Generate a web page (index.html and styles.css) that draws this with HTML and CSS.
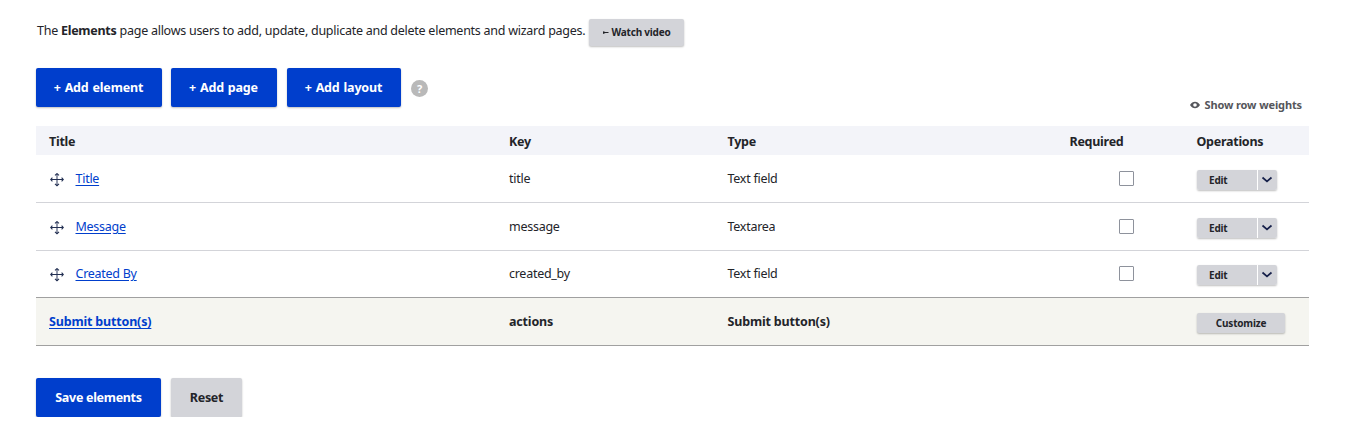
FILE: index.html
```html
<!DOCTYPE html>
<html lang="en">
<head>
<meta charset="utf-8">
<title>Elements</title>
<link rel="stylesheet" href="styles.css">
</head>
<body>
<svg class="defs" aria-hidden="true">
  <symbol id="move" viewBox="0 0 14 14"><path d="M7 1v12" fill="none" stroke="#8b91a5" stroke-width="1.800"/><path d="M1 6.500h12M5 2.400 7 .6l2 1.800M5 10.900l2 1.800 2-1.800M2.400 4.700 .7 6.500l1.700 1.800M11.600 4.700l1.700 1.800-1.700 1.800" fill="none" stroke="#222f52" stroke-width="1.100"/></symbol>
  <symbol id="chevron" viewBox="0 0 12 8"><path d="M1.500 1.500 6 5.400l4.500-3.900" fill="none" stroke="#16204a" stroke-width="1.700"/></symbol>
</svg>
<main class="page">
  <div class="intro">
    <span class="intro-text">The <strong>Elements</strong> page allows users to add, update, duplicate and delete elements and wizard pages.</span>
    <button class="button video"><svg class="play" viewBox="0 0 6 5"><path d="M0 1.200 2.500 2H5.500V3H2.500L0 4z" fill="#232429"/></svg><span>Watch video</span></button>
  </div>
  <div class="actions">
    <button class="button primary b-element"><span>+ Add element</span></button>
    <button class="button primary b-page"><span>+ Add page</span></button>
    <button class="button primary b-layout"><span>+ Add layout</span></button>
    <span class="help">?</span>
    <a class="weights"><svg class="eye" viewBox="0 0 10 8"><path fill="#55565b" fill-rule="evenodd" d="M0 4C1.500 1.500 3 .8 5 .8S8.500 1.500 10 4C8.500 6.500 7 7.200 5 7.200S1.500 6.500 0 4zM5 2.200a1.800 1.800 0 1 0 0 3.600 1.800 1.800 0 0 0 0-3.600z"/></svg><span>Show row weights</span></a>
  </div>
  <div class="table">
    <div class="row head"><span>Title</span><span>Key</span><span>Type</span><span>Required</span><span>Operations</span></div>
    <div class="row">
      <span class="cell"><svg class="move"><use href="#move"/></svg><a class="link">Title</a></span><span>title</span><span>Text field</span><span class="check"></span>
      <div class="split"><button class="edit">Edit</button><button class="toggle"><svg class="chevron"><use href="#chevron"/></svg></button></div>
    </div>
    <div class="row">
      <span class="cell"><svg class="move"><use href="#move"/></svg><a class="link">Message</a></span><span>message</span><span>Textarea</span><span class="check"></span>
      <div class="split"><button class="edit">Edit</button><button class="toggle"><svg class="chevron"><use href="#chevron"/></svg></button></div>
    </div>
    <div class="row last">
      <span class="cell"><svg class="move"><use href="#move"/></svg><a class="link">Created By</a></span><span>created_by</span><span>Text field</span><span class="check"></span>
      <div class="split"><button class="edit">Edit</button><button class="toggle"><svg class="chevron"><use href="#chevron"/></svg></button></div>
    </div>
    <div class="row submit"><a class="link">Submit button(s)</a><span>actions</span><span>Submit button(s)</span><span></span><button class="button customize"><span>Customize</span></button></div>
  </div>
  <div class="footer">
    <button class="button primary save"><span>Save elements</span></button>
    <button class="button reset"><span>Reset</span></button>
  </div>
</main>
</body>
</html>
```
FILE: styles.css
```css
* { box-sizing: border-box; }
body { margin: 0; background: #fff; color: #232429; font: 12.5px/18px "Noto Sans", "Open Sans", sans-serif; letter-spacing: -.27px; white-space: nowrap; }
.defs { display: none; }
.page { padding: 19px 36px 0; }
.intro { display: flex; height: 49px; }
.intro-text { width: 549px; padding: 3px 0 0 1px; margin-right: 4px; letter-spacing: -.26px; }
.button { display: flex; align-items: center; justify-content: center; border: 0; border-radius: 2px; padding: 0; height: 39px; background: #d3d4d9; color: #232429; font: bold 12.5px/18px "Noto Sans", "Open Sans", sans-serif; letter-spacing: -.3px; box-shadow: 0 1px 2px rgba(0,0,0,.25); }
.primary { background: #003ecc; color: #fff; }
.video { width: 95px; height: 27px; padding-bottom: 2px; font-size: 10px; letter-spacing: -.22px; gap: 3px; }
.play { width: 6px; height: 5px; margin-top: 2px; }
.actions { display: flex; height: 58px; }
.actions .button { padding-right: 1px; letter-spacing: -.16px; word-spacing: .8px; }
.b-element { width: 126px; margin-right: 9px; }
.b-page { width: 106px; margin-right: 10px; }
.b-layout { width: 114px; }
.help { width: 17px; height: 17px; margin: 12px 0 0 10px; border-radius: 50%; background: #b9b9b9; color: #fff; font-weight: bold; font-size: 11px; line-height: 17px; text-align: center; }
.weights { display: flex; align-items: center; height: 18px; gap: 4px; margin: 28px 7px 0 auto; color: #55565b; font-size: 11px; font-weight: bold; letter-spacing: -.12px; }
.eye { width: 10px; height: 8px; }
.row { display: grid; grid-template-columns: 460px 218.5px 342px 127px 1fr; height: 48px; padding: 15px 0 0 13px; border-bottom: 1px solid #d3d4d9; }
.head { height: 29px; padding-top: 7px; border: 0; background: #f3f4f9; font-weight: bold; }
.last { height: 47px; padding-top: 14px; border-color: #a0a0a0; }
.submit { background: #f5f5f0; border-color: #a0a0a0; font-weight: bold; letter-spacing: -.17px; }
.cell { display: flex; }
.move { width: 14px; height: 14px; margin: 3px 11.5px 0 1px; }
.link { color: #003ecc; text-decoration: underline; text-underline-offset: 2px; }
.check { width: 15px; height: 15px; margin: 1px 0 0 49.5px; border: 1px solid #8e929c; border-radius: 1px; }
.split { display: flex; gap: 1px; width: 80px; height: 20px; margin-left: .5px; border-radius: 2px; box-shadow: 0 1px 2px rgba(0,0,0,.25); background: #fff; }
.edit, .toggle { border: 0; padding: 0; background: #d3d4d9; color: #232429; }
.edit { width: 60px; padding: 0 0 1px 12px; border-radius: 2px 0 0 2px; text-align: left; font: bold 10px/18px "Noto Sans", sans-serif; letter-spacing: -.2px; }
.toggle { display: flex; align-items: center; justify-content: center; width: 19px; padding-right: 1px; border-radius: 0 2px 2px 0; }
.chevron { width: 12px; height: 8px; }
.customize { width: 88px; height: 20px; margin-left: .5px; padding-bottom: 1px; font-size: 10px; letter-spacing: -.2px; }
.footer { display: flex; gap: 10px; padding-top: 32px; }
.save { width: 125px; }
.reset { width: 71px; }
```
